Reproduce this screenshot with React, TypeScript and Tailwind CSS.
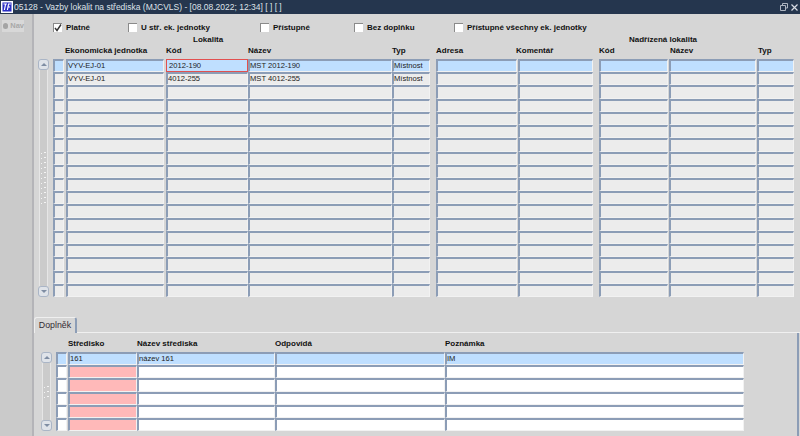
import React from 'react';

const font = { fontFamily: '"Liberation Sans", Arial, sans-serif' };

const cellBase = 'h-full shrink-0 overflow-hidden whitespace-nowrap border-t-2 border-l-2 border-r border-b border-t-[#8c9db6] border-l-[#8c9db6] border-r-[#f2f2f2] border-b-[#f2f2f2] text-[7.6px] leading-[10px] text-[#222]';

function Cell({ w, bg, text }: { w: string; bg: string; text?: string }) {
  return <div className={`${cellBase} ${w} ${bg}`}>{text}</div>;
}

function ScrollButton({ down }: { down?: boolean }) {
  return (
    <div className="flex h-[11px] w-[11px] items-center justify-center rounded-[3px] border border-[#aab5c6] bg-[#dfe3e9]">
      <svg width="6" height="3" viewBox="0 0 6 3">
        <path d={down ? 'M0 0H6L3 3Z' : 'M0 3H6L3 0Z'} fill="#7f8da3" />
      </svg>
    </div>
  );
}

function Scrollbar({ grip }: { grip: number }) {
  return (
    <div className="flex h-full w-[11px] shrink-0 flex-col items-center">
      <ScrollButton />
      <div className="flex w-[9px] flex-1 flex-col items-center justify-center gap-[3px] border-x border-x-[#e6e6e6] bg-[#cbcbcb]">
        {Array.from({ length: grip }).map((_, i) => (
          <div key={i} className="flex h-[2px] w-[5px] justify-between">
            <div className="mt-[1px] h-[1px] w-[1px] bg-[#f4f4f4]" />
            <div className="h-[1px] w-[2px] bg-[#f4f4f4]" />
          </div>
        ))}
      </div>
      <ScrollButton down />
    </div>
  );
}

function Label({ w, text }: { w: string; text: string }) {
  return <div className={`shrink-0 whitespace-nowrap font-bold text-[8px] text-[#111] ${w}`}>{text}</div>;
}

function Check({ label, checked, w }: { label: string; checked?: boolean; w: string }) {
  return (
    <div className={`flex shrink-0 items-center gap-[4px] ${w}`}>
      <div className="mb-[1px] flex h-[9px] w-[9px] items-center justify-center border-t border-l border-[#8a8a8a] bg-white">
        {checked && (
          <svg width="8" height="8" viewBox="0 0 8 8">
            <path d="M1 4L3 6.5L7 0.5" stroke="#333" strokeWidth="1.4" fill="none" />
          </svg>
        )}
      </div>
      <span className="whitespace-nowrap font-bold text-[8px] text-[#111]">{label}</span>
    </div>
  );
}

const topRows = Array.from({ length: 18 }).map((_, i) => i);
const bottomRows = Array.from({ length: 6 }).map((_, i) => i);

function TopRow({ row }: { row: number }) {
  const bg = row === 0 ? 'bg-[#bfdfff]' : 'bg-[#ececec]';
  const ej = row < 2 ? 'VYV-EJ-01' : '';
  const kod = row === 0 ? '2012-190' : row === 1 ? '4012-255' : '';
  const nazev = row === 0 ? 'MST 2012-190' : row === 1 ? 'MST 4012-255' : '';
  const typ = row < 2 ? 'Místnost' : '';
  return (
    <div className="flex min-h-0 flex-1 items-stretch">
      <Cell w="w-[11px]" bg={bg} />
      <div className="w-[2px] shrink-0" />
      <Cell w="w-[98px]" bg={bg} text={ej} />
      <div className="w-[2px] shrink-0" />
      {row === 0 ? (
        <div className="h-full w-[82px] shrink-0 border border-[#e2504f] bg-[#bfdfff] pl-[2px] text-[7.6px] leading-[11px] text-[#222]">{kod}</div>
      ) : (
        <Cell w="w-[82px]" bg={bg} text={kod} />
      )}
      <Cell w="w-[144px]" bg={bg} text={nazev} />
      <Cell w="w-[38px]" bg={bg} text={typ} />
      <div className="w-[6px] shrink-0" />
      <Cell w="w-[81px]" bg={bg} />
      <div className="w-[1px] shrink-0" />
      <Cell w="w-[75px]" bg={bg} />
      <div className="w-[6px] shrink-0" />
      <Cell w="w-[69px]" bg={bg} />
      <div className="w-[1px] shrink-0" />
      <Cell w="w-[87px]" bg={bg} />
      <div className="w-[1px] shrink-0" />
      <Cell w="w-[37px]" bg={bg} />
    </div>
  );
}

function BottomRow({ row }: { row: number }) {
  const bg = row === 0 ? 'bg-[#bfdfff]' : 'bg-white';
  const req = row === 0 ? 'bg-[#bfdfff]' : 'bg-[#ffb9b9]';
  return (
    <div className="flex min-h-0 flex-1 items-stretch">
      <Cell w="w-[11px]" bg={bg} />
      <div className="w-[1px] shrink-0" />
      <Cell w="w-[69px]" bg={req} text={row === 0 ? '161' : ''} />
      <Cell w="w-[138px]" bg={bg} text={row === 0 ? 'název 161' : ''} />
      <Cell w="w-[170px]" bg={bg} />
      <Cell w="w-[299px]" bg={bg} text={row === 0 ? 'IM' : ''} />
    </div>
  );
}

export default function App() {
  return (
    <div className="flex h-[436px] w-[800px] flex-col overflow-hidden bg-[#d6d6d6]" style={font}>
      {/* Title bar */}
      <div className="flex h-[14px] shrink-0 items-center bg-[#25364e] pl-[1px] pr-[2px] text-[#dfe3e9]">
        <svg width="12" height="12" viewBox="0 0 12 12" className="shrink-0">
          <rect x="0.5" y="0.5" width="11" height="11" fill="#f4f6ff" stroke="#ffffff" />
          <rect x="1.5" y="1.5" width="9" height="9" fill="#2a2ec4" />
          <path d="M2.5 3H6M4.6 3L3.4 9M6.5 6H9M9.8 3H7.6L6.4 9" stroke="#ffffff" strokeWidth="1.2" fill="none" />
        </svg>
        <span className="ml-[1px] whitespace-nowrap text-[8.5px]">05128 - Vazby lokalit na střediska (MJCVLS) - [08.08.2022; 12:34] [ ] [ ]</span>
        <div className="ml-auto flex items-center gap-[3px]">
          <svg width="8" height="8" viewBox="0 0 8 8">
            <path d="M2.5 2V0.5H7.5V5H6M0.5 2.5H5.5V7.5H0.5Z" stroke="#aeb6c2" fill="none" />
          </svg>
          <svg width="7" height="7" viewBox="0 0 7 7">
            <path d="M0.5 0.5L6.5 6.5M6.5 0.5L0.5 6.5" stroke="#d8dce4" strokeWidth="1.2" />
          </svg>
        </div>
      </div>

      <div className="flex min-h-0 flex-1">
        {/* Left rail */}
        <div className="w-[34px] shrink-0 border-r-2 border-r-[#b4b4b8] bg-[#cacaca] pl-[2px] pt-[6px]">
          <div className="flex h-[12px] w-[22px] items-center gap-[2px] bg-[#d8d8d8] pl-[1px] text-[7.5px] font-bold text-[#a8a8a8]">
            <div className="h-[6px] w-[6px] rounded-full bg-[#a4a4a4]" />
            Nav
          </div>
        </div>

        <div className="flex min-w-0 flex-1 flex-col">
          {/* Filters */}
          <div className="flex h-[24px] shrink-0 items-center pl-[19px] pt-[3px]">
            <Check label="Platné" checked w="w-[75px]" />
            <Check label="U stř. ek. jednotky" w="w-[132px]" />
            <Check label="Přístupné" w="w-[94px]" />
            <Check label="Bez doplňku" w="w-[100px]" />
            <Check label="Přístupné všechny ek. jednotky" w="w-[160px]" />
          </div>

          {/* Headers */}
          <div className="relative h-[20px] shrink-0">
            <div className="absolute left-[159px] top-[-4px] font-bold text-[8px] text-[#111]">Lokalita</div>
            <div className="absolute left-[595px] top-[-4px] font-bold text-[8px] text-[#111]">Nadřízená lokalita</div>
            <div className="flex pl-[31px] pt-[7px]">
              <Label w="w-[101px]" text="Ekonomická jednotka" />
              <Label w="w-[82px]" text="Kód" />
              <Label w="w-[144px]" text="Název" />
              <Label w="w-[44px]" text="Typ" />
              <Label w="w-[80px]" text="Adresa" />
              <Label w="w-[83px]" text="Komentář" />
              <Label w="w-[71px]" text="Kód" />
              <Label w="w-[88px]" text="Název" />
              <Label w="w-[37px]" text="Typ" />
            </div>
          </div>

          {/* Upper block */}
          <div className="flex h-[239px] shrink-0 gap-[4px] pl-[4px] pt-[1px]">
            <Scrollbar grip={11} />
            <div className="flex h-full flex-col">
              {topRows.map(r => <TopRow key={r} row={r} />)}
            </div>
          </div>

          {/* Tab */}
          <div className="mt-[19px] flex h-[17px] shrink-0 items-end">
            <div className="flex h-[16px] w-[43px] items-center justify-center rounded-t-[3px] border-t border-l border-t-[#efefef] border-l-[#efefef] border-r-2 border-r-[#8c9db6] text-[8.8px] text-[#332a33]">Doplněk</div>
            <div className="h-[1px] flex-1 bg-[#f0f0f0]" />
          </div>

          {/* Lower block */}
          <div className="mr-[1px] flex min-h-0 flex-1 flex-col border-r-2 border-r-[#8c9db6]">
            <div className="flex h-[19px] shrink-0 pl-[34px] pt-[5px]">
              <Label w="w-[69px]" text="Středisko" />
              <Label w="w-[138px]" text="Název střediska" />
              <Label w="w-[170px]" text="Odpovídá" />
              <Label w="w-[120px]" text="Poznámka" />
            </div>
            <div className="flex h-[79px] shrink-0 gap-[4px] pl-[7px]">
              <Scrollbar grip={3} />
              <div className="flex h-full flex-col">
                {bottomRows.map(r => <BottomRow key={r} row={r} />)}
              </div>
            </div>
          </div>
        </div>
      </div>
    </div>
  );
}
